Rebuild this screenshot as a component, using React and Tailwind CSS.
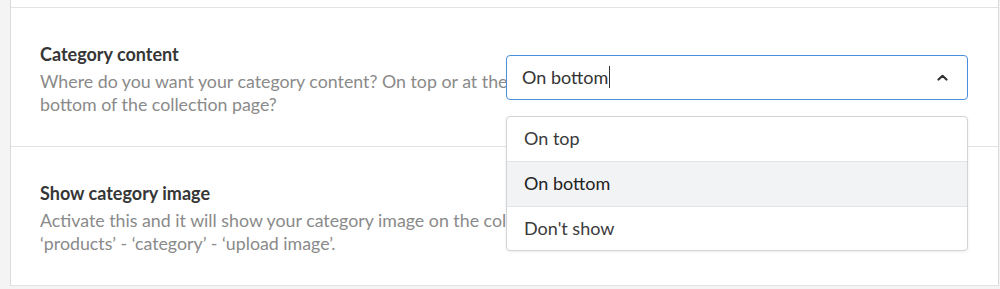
import React from "react";

const font = { fontFamily: "Lato, 'Noto Sans', sans-serif" };

const options = ["On top", "On bottom", "Don't show"];

const ChevronUp = () => (
  <svg width="11" height="7" viewBox="0 0 11 7" className="text-[#333]">
    <path
      d="M1.5 5.5 L5.5 1.8 L9.5 5.5"
      fill="none"
      stroke="currentColor"
      strokeWidth="2.2"
      strokeLinecap="round"
      strokeLinejoin="round"
    />
  </svg>
);

const SettingRow = ({ title, children, control }) => (
  <div className="flex h-[139px] items-center border-b border-[#e3e3e3] pl-[29px] pr-[30px]">
    <div className="w-[465px] shrink-0 self-start pt-[34px]">
      <h3 className="text-[18px] font-bold leading-[24px] text-[#363636]">
        {title}
      </h3>
      <p className="mt-[4px] w-[495px] text-[17.8px] leading-[23px] text-[#8a8a8a]">
        {children}
      </p>
    </div>
    <div className="relative z-10 ml-auto w-[462px]">{control}</div>
  </div>
);

const Select = () => (
  <>
    <div className="flex h-[45px] items-center rounded-[4px] border border-[#4a8fdb] bg-white pl-[15px] pr-[19px]">
      <span className="text-[18px] text-[#333]">On bottom</span>
      <span className="ml-[1px] h-[22px] w-px bg-[#333]" />
      <span className="ml-auto">
        <ChevronUp />
      </span>
    </div>
    <ul className="absolute left-0 right-0 top-full mt-[16px] overflow-hidden rounded-[4px] border border-[#d3d3d3] bg-white shadow-[0_1px_3px_rgba(0,0,0,0.08)]">
      {options.map((opt, i) => (
        <li
          key={opt}
          className={
            "flex h-[44.5px] items-center px-[17px] text-[18px] " +
            (i > 0 ? "border-t border-[#e3e3e3] " : "") +
            (opt === "On bottom"
              ? "bg-[#f2f3f4] text-[#222]"
              : "text-[#3a3a3a]")
          }
        >
          {opt}
        </li>
      ))}
    </ul>
  </>
);

export default function App() {
  return (
    <div className="h-[289px] w-[1000px] bg-[#f4f4f4]" style={font}>
      <div className="ml-[10px] h-[286px] w-[989px] border-x border-[#dadada] bg-white">
        <div className="h-[8px] border-b border-[#e3e3e3]" />
        <SettingRow title="Category content" control={<Select />}>
          Where do you want your category content? On top or at the bottom of
          the collection page?
        </SettingRow>
        <SettingRow title="Show category image" control={null}>
          <span className="whitespace-nowrap">
            Activate this and it will show your category image on the collection
            page via
          </span>
          <br />
          ‘products’ - ‘category’ - ‘upload image’.
        </SettingRow>
      </div>
    </div>
  );
}
